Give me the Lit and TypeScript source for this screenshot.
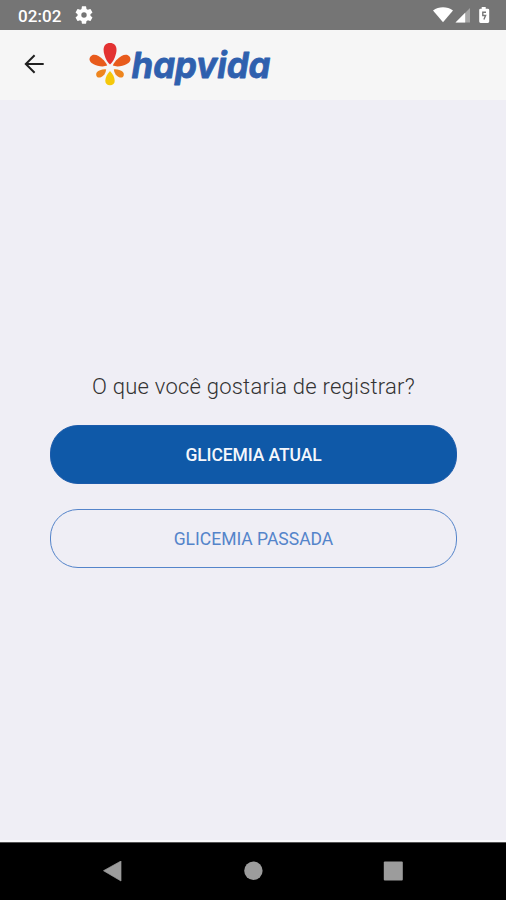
import { LitElement, html, css } from "lit";
import { customElement } from "lit/decorators.js";

@customElement("status-bar")
class StatusBar extends LitElement {
  static styles = css`
    :host { display: flex; align-items: center; height: 30px; flex: none; background: #757575; color: #fff;
      box-sizing: border-box; padding: 0 15px 0 18px; }
    .time { font: 500 17px/30px Roboto, sans-serif; letter-spacing: 0.1px; padding-top: 2px; }
    .gear { width: 18px; height: 18px; margin-left: 13px; }
    .tray { display: block; width: 60px; height: 30px; margin-left: auto; }
  `;
  render() {
    return html`
      <span class="time">02:02</span>
      <svg class="gear" viewBox="2 2 20 20" fill="#fff"><path d="M19.14 12.94c.04-.3.06-.61.06-.94 0-.32-.02-.64-.07-.94l2.03-1.58a.49.49 0 0 0 .12-.61l-1.92-3.32a.488.488 0 0 0-.59-.22l-2.39.96c-.5-.38-1.03-.7-1.62-.94l-.36-2.54a.484.484 0 0 0-.48-.41h-3.84c-.24 0-.43.17-.47.41l-.36 2.54c-.59.24-1.13.57-1.62.94l-2.39-.96c-.22-.08-.47 0-.59.22L2.74 8.87c-.12.21-.08.47.12.61l2.03 1.58c-.05.3-.09.63-.09.94s.02.64.07.94l-2.03 1.58a.49.49 0 0 0-.12.61l1.92 3.32c.12.22.37.29.59.22l2.39-.96c.5.38 1.03.7 1.62.94l.36 2.54c.05.24.24.41.48.41h3.84c.24 0 .44-.17.47-.41l.36-2.54c.59-.24 1.13-.56 1.62-.94l2.39.96c.22.08.47 0 .59-.22l1.92-3.32c.12-.22.07-.47-.12-.61l-2.01-1.58zM12 15a3 3 0 1 1 0-6 3 3 0 0 1 0 6z"/></svg>
      <svg class="tray" viewBox="431 0 60 30" fill="#fff">
        <path d="M433 10.500C438.800 6.300 447.200 6.300 453 10.500L443 22.300Z"/>
        <path d="M455.500 22.500L470 8v14.500Z" fill="#a6a6a6"/>
        <path d="M455.500 22.500L465.200 12.800v9.700Z"/>
        <path d="M481.700 7h4v1.700h2.100q1.400 0 1.400 1.400V21.600q0 1.400-1.400 1.400h-7.200q-1.400 0-1.400-1.400V10.100q0-1.400 1.400-1.400h1.100Z"/>
        <path d="M486 12.300h-3.200v3.200h2.800l-1.700 4" fill="none" stroke="#777" stroke-width="1.400"/>
      </svg>`;
  }
}

@customElement("app-header")
class AppHeader extends LitElement {
  static styles = css`
    :host { display: flex; align-items: center; flex: none; height: 70px; background: #f6f6f6;
      box-sizing: border-box; padding-left: 20px; }
    .back { width: 28px; height: 28px; margin-bottom: 3px; }
    .brand { display: block; width: 186px; height: 70px; margin-left: 38px; overflow: visible; }
    .word { font: italic 700 36px Inter, "Open Sans", sans-serif; font-feature-settings: "cv11" 1; fill: #2f60ae;
      stroke: #2f60ae; stroke-width: 0.8px; stroke-linejoin: round; }
  `;
  render() {
    return html`
      <svg class="back" viewBox="20 50 28 28" fill="none" stroke="#202020" stroke-width="2"><path d="M43.700 64H26M34.600 55.200L25.800 64L34.600 72.800"/></svg>
      <svg class="brand" viewBox="86 30 186 70">
        <path d="M110 64.500C106.500 62 103.600 54.500 103.600 49.800C103.600 45.500 106 43 110 43S116.500 45.500 116.500 49.800C116.500 54.500 113.500 62 110 64.500Z" fill="#e33232"/>
        <path d="M107.200 65.600C103.200 67.200 97 66.200 93.200 64C89.600 61.900 88.600 59.200 90.300 56.700C92.200 54 95.400 54.200 98.500 55.900C102.400 58.200 106 62 107.200 65.600Z" fill="#e85b1c"/>
        <path d="M112.800 65.600C116.800 67.200 123 66.200 126.800 64C130.400 61.900 131.400 59.200 129.700 56.700C127.800 54 124.600 54.200 121.500 55.900C117.600 58.200 114 62 112.800 65.600Z" fill="#e85b1c"/>
        <path d="M106.200 69.400C105.800 73 103.800 76 100.900 77.200C98.300 78.200 96.500 77 96.200 74.900C95.900 72.600 97.500 71 100 70.200C102.200 69.500 104.400 69 106.200 69.400Z" fill="#ee851e"/>
        <path d="M113.800 69.400C114.200 73 116.200 76 119.100 77.200C121.700 78.200 123.500 77 123.800 74.900C124.100 72.600 122.500 71 120 70.200C117.800 69.500 115.600 69 113.800 69.400Z" fill="#ee851e"/>
        <path d="M110 71C112.600 73.600 114.700 77.400 114.700 80.700C114.700 83.500 112.900 85.200 110 85.200S105.300 83.500 105.300 80.700C105.300 77.400 107.400 73.600 110 71Z" fill="#f5c80a"/>
        <text class="word" x="131.500" y="77.500" textLength="139" lengthAdjust="spacingAndGlyphs">hapvida</text>
      </svg>`;
  }
}

@customElement("nav-bar")
class NavBar extends LitElement {
  static styles = css`
    :host { display: flex; justify-content: space-between; flex: none; height: 58px; box-sizing: border-box;
      padding: 18px 103px 0 102px; background: #000; border-top: 1px solid #555; }
    svg { width: 20px; height: 22px; fill: #9c9c9c; }
  `;
  render() {
    return html`
      <svg viewBox="0 0 20 22"><path d="M1.500 9.700L19 0v20Z" stroke="#9c9c9c" stroke-width=".7" stroke-linejoin="round"/></svg>
      <svg viewBox="0 0 20 22"><circle cx="10.400" cy="9.700" r="9.200"/></svg>
      <svg viewBox="0 0 20 22"><rect x=".8" y=".5" width="19" height="19" rx="1"/></svg>`;
  }
}

@customElement("app-root")
class AppRoot extends LitElement {
  static styles = css`
    :host { display: flex; flex-direction: column; height: 900px; width: 100%; background: #efeef5;
      font-family: Roboto, sans-serif; }
    main { flex: 1; display: flex; flex-direction: column; box-sizing: border-box; padding: 271px 49px 0 50px;
      border-bottom: 2px solid #fafafc; }
    h1 { margin: 0 0 22px; font-size: 22px; line-height: 32px; font-weight: 300; color: #333; text-align: center;
      letter-spacing: 0.23px; white-space: nowrap; }
    button { display: block; height: 59px; width: 100%; padding: 0; box-sizing: border-box; border-radius: 28px;
      font: 500 17.500px/58px Roboto, sans-serif; letter-spacing: -0.1px; border: 1px solid #1b5bab;
      background: #0f59a8; color: #f5f7fc; }
    .outline { margin-top: 25px; letter-spacing: 0; background: transparent; color: #5484ca;
      border-color: #5484ca; font-weight: 400; }
  `;
  render() {
    return html`
      <status-bar></status-bar>
      <app-header></app-header>
      <main>
        <h1>O que você gostaria de registrar?</h1>
        <button>GLICEMIA ATUAL</button>
        <button class="outline">GLICEMIA PASSADA</button>
      </main>
      <nav-bar></nav-bar>`;
  }
}
